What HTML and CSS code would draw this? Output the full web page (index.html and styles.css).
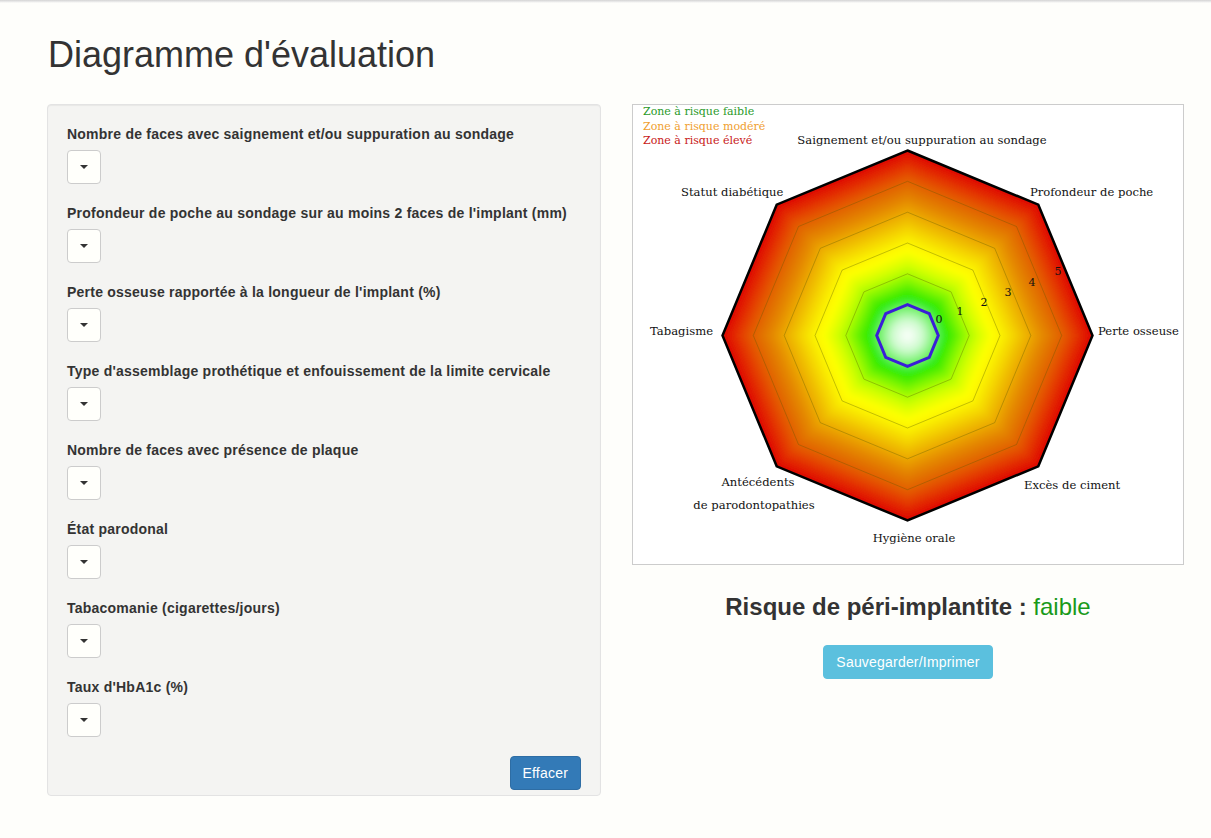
FILE: index.html
```html
<!DOCTYPE html>
<html lang="fr">
<head>
<meta charset="utf-8">
<title>Diagramme d'évaluation</title>
<link rel="stylesheet" href="styles.css">
</head>
<body>
<div class="topline"></div>
<div class="page">
  <h1 class="title">Diagramme d'évaluation</h1>
  <div class="columns">
    <div class="well">
      <div class="group"><label class="lbl">Nombre de faces avec saignement et/ou suppuration au sondage</label><button class="dd"><span class="caret"></span></button></div>
      <div class="group"><label class="lbl">Profondeur de poche au sondage sur au moins 2 faces de l'implant (mm)</label><button class="dd"><span class="caret"></span></button></div>
      <div class="group"><label class="lbl">Perte osseuse rapportée à la longueur de l'implant (%)</label><button class="dd"><span class="caret"></span></button></div>
      <div class="group"><label class="lbl">Type d'assemblage prothétique et enfouissement de la limite cervicale</label><button class="dd"><span class="caret"></span></button></div>
      <div class="group"><label class="lbl">Nombre de faces avec présence de plaque</label><button class="dd"><span class="caret"></span></button></div>
      <div class="group"><label class="lbl">État parodonal</label><button class="dd"><span class="caret"></span></button></div>
      <div class="group"><label class="lbl">Tabacomanie (cigarettes/jours)</label><button class="dd"><span class="caret"></span></button></div>
      <div class="group"><label class="lbl">Taux d'HbA1c (%)</label><button class="dd"><span class="caret"></span></button></div>
      <div class="actions"><button class="btn btn-primary">Effacer</button></div>
    </div>
    <div class="right">
      <div class="chart">
        <svg class="radar" width="550" height="459" viewBox="0 0 550 459">
          <defs>
            <polygon id="oct" points="0,-185 130.8,-130.8 185,0 130.8,130.8 0,185 -130.8,130.8 -185,0 -130.8,-130.8"/>
            <clipPath id="octclip">
              <polygon points="0,-185 130.8,-130.8 185,0 130.8,130.8 0,185 -130.8,130.8 -185,0 -130.8,-130.8"/>
            </clipPath>
            <filter id="soft" x="-20%" y="-20%" width="140%" height="140%">
              <feGaussianBlur stdDeviation="3"/>
            </filter>
            <radialGradient id="core">
              <stop offset="0" stop-color="#ffffff"/>
              <stop offset="0.4" stop-color="#d0fbd0"/>
              <stop offset="1" stop-color="#30ea20"/>
            </radialGradient>
          </defs>
          <g transform="translate(274.5,230.5)">
            <g clip-path="url(#octclip)">
              <g filter="url(#soft)">
                <use href="#oct" transform="scale(1.08)" fill="#dc0800"/>
                <use href="#oct" fill="#e01000"/>
                <use href="#oct" transform="scale(0.96)" fill="#e22800"/>
                <use href="#oct" transform="scale(0.92)" fill="#e43e00"/>
                <use href="#oct" transform="scale(0.88)" fill="#e45400"/>
                <use href="#oct" transform="scale(0.84)" fill="#e26600"/>
                <use href="#oct" transform="scale(0.80)" fill="#e27600"/>
                <use href="#oct" transform="scale(0.76)" fill="#e48600"/>
                <use href="#oct" transform="scale(0.72)" fill="#e89800"/>
                <use href="#oct" transform="scale(0.68)" fill="#ecac00"/>
                <use href="#oct" transform="scale(0.64)" fill="#f0be00"/>
                <use href="#oct" transform="scale(0.60)" fill="#f4d200"/>
                <use href="#oct" transform="scale(0.56)" fill="#f8e400"/>
                <use href="#oct" transform="scale(0.52)" fill="#fcf400"/>
                <use href="#oct" transform="scale(0.48)" fill="#ffff00"/>
                <use href="#oct" transform="scale(0.44)" fill="#eaff00"/>
                <use href="#oct" transform="scale(0.40)" fill="#d0ff00"/>
                <use href="#oct" transform="scale(0.36)" fill="#b0fc00"/>
                <use href="#oct" transform="scale(0.32)" fill="#88f800"/>
                <use href="#oct" transform="scale(0.28)" fill="#5cf000"/>
                <use href="#oct" transform="scale(0.24)" fill="#30ec00"/>
                <use href="#oct" transform="scale(0.20)" fill="url(#core)"/>
              </g>
            </g>
            <g class="grid">
              <polygon points="0,-61.7 43.6,-43.6 61.7,0 43.6,43.6 0,61.7 -43.6,43.6 -61.7,0 -43.6,-43.6"/>
              <polygon points="0,-92.5 65.4,-65.4 92.5,0 65.4,65.4 0,92.5 -65.4,65.4 -92.5,0 -65.4,-65.4"/>
              <polygon points="0,-123.3 87.2,-87.2 123.3,0 87.2,87.2 0,123.3 -87.2,87.2 -123.3,0 -87.2,-87.2"/>
              <polygon points="0,-154.2 109,-109 154.2,0 109,109 0,154.2 -109,109 -154.2,0 -109,-109"/>
            </g>
            <polygon class="outer" points="0,-185 130.8,-130.8 185,0 130.8,130.8 0,185 -130.8,130.8 -185,0 -130.8,-130.8"/>
            <polygon class="value" points="0,-30.8 21.8,-21.8 30.8,0 21.8,21.8 0,30.8 -21.8,21.8 -30.8,0 -21.8,-21.8"/>
          </g>
          <g class="legend">
            <text x="10" y="10" class="lg-low">Zone à risque faible</text>
            <text x="10" y="24.5" class="lg-mid">Zone à risque modéré</text>
            <text x="10" y="39" class="lg-high">Zone à risque élevé</text>
          </g>
          <g class="axis">
            <text x="289" y="39" text-anchor="middle">Saignement et/ou suppuration au sondage</text>
            <text x="397" y="91">Profondeur de poche</text>
            <text x="465" y="230">Perte osseuse</text>
            <text x="391" y="384">Excès de ciment</text>
            <text x="281" y="437" text-anchor="middle">Hygiène orale</text>
            <text x="125" y="381" text-anchor="middle">Antécédents</text>
            <text x="121" y="404" text-anchor="middle">de parodontopathies</text>
            <text x="17" y="230">Tabagisme</text>
            <text x="48" y="91">Statut diabétique</text>
          </g>
          <g class="ticks">
            <text x="306" y="218">0</text>
            <text x="327" y="210">1</text>
            <text x="351" y="201">2</text>
            <text x="375" y="191">3</text>
            <text x="399" y="181">4</text>
            <text x="425" y="170">5</text>
          </g>
        </svg>
      </div>
      <h3 class="risk">Risque de péri-implantite : <span class="level">faible</span></h3>
      <div class="save"><button class="btn btn-info">Sauvegarder/Imprimer</button></div>
    </div>
  </div>
</div>
</body>
</html>
```

FILE: styles.css
```css
html, body {
  margin: 0;
  padding: 0;
}
body {
  background: #fefefb;
  font-family: "Liberation Sans", Arial, Helvetica, sans-serif;
  font-size: 14px;
  line-height: 1.42857;
  color: #333;
}
.topline {
  height: 3px;
  background: linear-gradient(#d4d4d4, #ececec 60%, #fefefb);
}
.page {
  padding: 0 27px 0 47px;
}
.title {
  margin: 32px 0 0 1px;
  font-size: 36px;
  font-weight: 500;
  line-height: 39.6px;
  color: #333;
}
.columns {
  display: flex;
  align-items: flex-start;
  gap: 31px;
  margin-top: 29px;
}
.well {
  box-sizing: border-box;
  width: 554px;
  padding: 19px 19px 5px;
  background: #f4f4f2;
  border: 1px solid #e3e3e3;
  border-radius: 4px;
  box-shadow: inset 0 1px 1px rgba(0,0,0,0.05);
}
.group {
  display: flex;
  flex-direction: column;
  align-items: flex-start;
  margin-bottom: 19px;
}
.group:last-of-type {
  margin-bottom: 20px;
}
.lbl {
  font-weight: bold;
  line-height: 20px;
  letter-spacing: 0.23px;
  margin-bottom: 6px;
}
.dd {
  width: 34px;
  height: 34px;
  padding: 0;
  background: #fffffb;
  border: 1px solid #ccc;
  border-radius: 4px;
  display: flex;
  align-items: center;
  justify-content: center;
}
.caret {
  width: 0;
  height: 0;
  border-top: 4px solid #333;
  border-left: 4px solid transparent;
  border-right: 4px solid transparent;
}
.actions {
  display: flex;
  justify-content: flex-end;
}
.btn {
  font-family: "Liberation Sans", Arial, sans-serif;
  font-size: 14px;
  line-height: 20px;
  letter-spacing: 0.2px;
  padding: 6px 12px;
  border: 1px solid transparent;
  border-radius: 4px;
  color: #fff;
}
.btn-primary {
  background: #337ab7;
  border-color: #2e6da4;
}
.btn-info {
  background: #5bc0de;
  border-color: #5bc0de;
}
.right {
  width: 552px;
  display: flex;
  flex-direction: column;
  align-items: center;
}
.chart {
  width: 550px;
  height: 459px;
  border: 1px solid #ccc;
  background: #fff;
}
.radar {
  display: block;
  font-family: "DejaVu Serif", "Liberation Serif", serif;
  font-size: 11px;
}
.axis text {
  font-size: 11.6px;
}
.grid polygon {
  fill: none;
  stroke: #5a5a00;
  stroke-opacity: 0.35;
  stroke-width: 1;
}
.outer {
  fill: none;
  stroke: #000;
  stroke-width: 2.5;
  stroke-linejoin: miter;
}
.value {
  fill: none;
  stroke: #3a1ed8;
  stroke-width: 3;
}
.axis text, .ticks text {
  fill: #111;
}
.ticks text {
  text-anchor: middle;
}
.lg-low { fill: #2a9a2a; }
.lg-mid { fill: #f0a030; }
.lg-high { fill: #c81818; }
.risk {
  margin: 29px 0 0;
  font-size: 24px;
  line-height: 26.4px;
  font-weight: bold;
  color: #333;
  text-align: center;
}
.level {
  font-weight: normal;
  color: #1a9a1a;
}
.save {
  margin-top: 25px;
}
```
